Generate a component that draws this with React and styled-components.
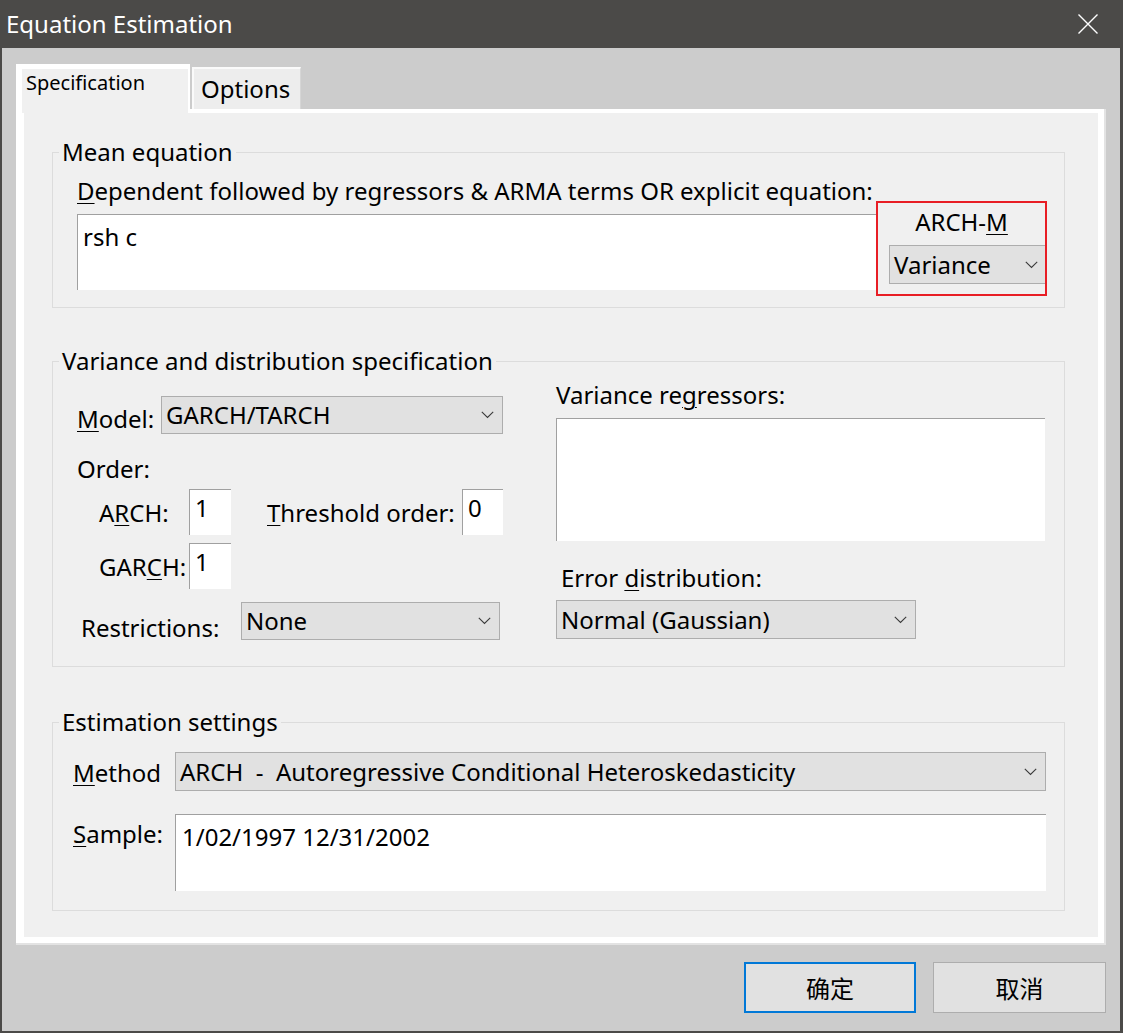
import React from "react";
import styled, { createGlobalStyle } from "styled-components";

const FONT = `"Noto Sans", "Noto Sans CJK SC", sans-serif`;

const GlobalStyle = createGlobalStyle`
  html, body {
    margin: 0;
    padding: 0;
    background: #cccccc;
  }
  * {
    box-sizing: border-box;
  }
`;

const Window = styled.div`
  width: 1123px;
  height: 1033px;
  display: flex;
  flex-direction: column;
  background: #cccccc;
  border-left: 2px solid #4b4a48;
  border-right: 3px solid #4b4a48;
  border-bottom: 2px solid #4b4a48;
  font-family: ${FONT};
  font-size: 24px;
  color: #000;
  overflow: hidden;
`;

const TitleBar = styled.div`
  height: 48px;
  flex: 0 0 48px;
  display: flex;
  align-items: center;
  justify-content: space-between;
  padding: 0 22px 0 4px;
  background: #4b4a48;
  color: #fff;
`;

const Title = styled.div`
  font-size: 24px;
  line-height: 32px;
`;

const Body = styled.div`
  flex: 1;
  display: flex;
  flex-direction: column;
  padding: 16px 14px 0 14px;
`;

const TabRow = styled.div`
  display: flex;
  align-items: flex-end;
  gap: 2px;
  height: 45px;
`;

const ActiveTab = styled.div`
  position: relative;
  z-index: 1;
  width: 174px;
  height: 49px;
  margin-bottom: -4px;
  padding: 0 0 0 4px;
  background: #f0f0f0;
  border-top: 5px solid #fff;
  border-left: 6px solid #fff;
  border-right: 2px solid #fff;
  font-size: 20px;
  line-height: 28px;
`;

const Tab = styled.div`
  width: 109px;
  height: 42px;
  padding: 4px 0 0 7px;
  background: #ededed;
  border-top: 2px solid #fafafa;
  border-left: 2px solid #fafafa;
  border-right: 1px solid #d6d6d6;
  font-size: 24px;
  line-height: 32px;
`;

const Panel = styled.div`
  height: 836px;
  padding: 4px 6px 6px 8px;
  background: #fff;
  border-right: 2px solid #e3e3e3;
  border-bottom: 2px solid #e3e3e3;
`;

const PanelInner = styled.div`
  height: 100%;
  display: flex;
  flex-direction: column;
  padding: 23px 0 0 28px;
  background: #f0f0f0;
`;

const Group = styled.fieldset`
  width: 1013px;
  min-width: 0;
  margin: ${(p) => p.$mt || 0}px 0 0 0;
  padding: 0;
  border: 1px solid #dcdcdc;
`;

const Legend = styled.legend`
  margin-left: 6px;
  padding: 0 3px;
  font-size: 24px;
  line-height: 32px;
`;

const GroupBody = styled.div`
  padding: ${(p) => p.$pad};
`;

const Label = styled.div`
  flex: 0 0 auto;
  width: ${(p) => (p.$w ? `${p.$w}px` : "auto")};
  margin-top: ${(p) => p.$mt || 0}px;
  margin-left: ${(p) => p.$ml || 0}px;
  padding-top: ${(p) => p.$pt || 0}px;
  line-height: 32px;
  white-space: nowrap;

  u {
    text-decoration-thickness: 1px;
    text-underline-offset: 3px;
  }
`;

const Row = styled.div`
  display: flex;
  align-items: flex-start;
  margin-top: ${(p) => p.$mt || 0}px;
`;

const Field = styled.div`
  flex: 0 0 auto;
  width: ${(p) => p.$w}px;
  height: ${(p) => p.$h}px;
  margin-top: ${(p) => p.$mt || 0}px;
  padding: ${(p) => p.$pad || "2px 5px"};
  background: #fff;
  border-top: 1px solid #a0a0a0;
  border-left: 1px solid #a0a0a0;
  line-height: 32px;
  white-space: pre;
`;

const SelectBox = styled.div`
  flex: 0 0 auto;
  display: flex;
  align-items: center;
  justify-content: space-between;
  width: ${(p) => p.$w}px;
  height: ${(p) => p.$h}px;
  margin-top: ${(p) => p.$mt || 0}px;
  padding: 0 8px 0 4px;
  background: #e1e1e1;
  border: 1px solid #adadad;
  line-height: 32px;
  white-space: pre;
  overflow: hidden;
`;

const Chevron = () => (
  <svg width="13" height="8" viewBox="0 0 13 8" fill="none">
    <path d="M0.8 0.8 L6.5 6.5 L12.2 0.8" stroke="#3a3a3a" strokeWidth="1.1" />
  </svg>
);

const Select = ({ children, ...rest }) => (
  <SelectBox {...rest}>
    <span>{children}</span>
    <Chevron />
  </SelectBox>
);

const MeanRow = styled.div`
  display: flex;
  align-items: flex-start;
`;

const MeanLeft = styled.div`
  width: 799px;
  flex: 0 0 799px;
`;

const ArchMBox = styled.div`
  width: 171px;
  height: 95px;
  margin-top: 26px;
  padding: 3px 0 0 11px;
  border: 2px solid #e81e25;
  overflow: hidden;
`;

const ArchMTitle = styled.div`
  line-height: 32px;
  text-align: center;
  padding-right: 11px;

  u {
    text-decoration-thickness: 1px;
    text-underline-offset: 3px;
  }
`;

const VarGrid = styled.div`
  display: grid;
  grid-template-columns: 426px 489px;
  column-gap: 53px;
`;

const Column = styled.div`
  display: flex;
  flex-direction: column;
  align-items: flex-start;
`;

const ButtonRow = styled.div`
  display: flex;
  justify-content: flex-end;
  gap: 17px;
  margin-top: 17px;
`;

const Button = styled.div`
  width: ${(p) => p.$w}px;
  height: 51px;
  display: flex;
  align-items: center;
  justify-content: center;
  background: #e1e1e1;
  border: ${(p) => (p.$primary ? "2px solid #0078d7" : "1px solid #adadad")};
  font-family: "Noto Sans CJK SC", sans-serif;
  font-size: 24px;
`;

const CloseIcon = () => (
  <svg width="20" height="20" viewBox="0 0 20 20">
    <path d="M0.5 0.5 L19.5 19.5 M19.5 0.5 L0.5 19.5" stroke="#fff" strokeWidth="1.4" />
  </svg>
);

export default function App() {
  return (
    <>
      <GlobalStyle />
      <Window>
        <TitleBar>
          <Title>Equation Estimation</Title>
          <CloseIcon />
        </TitleBar>
        <Body>
          <TabRow>
            <ActiveTab>Specification</ActiveTab>
            <Tab>Options</Tab>
          </TabRow>
          <Panel>
            <PanelInner>
              <Group>
                <Legend>Mean equation</Legend>
                <GroupBody $pad="7px 0 11px 24px">
                  <MeanRow>
                    <MeanLeft>
                      <Label>
                        <u>D</u>ependent followed by regressors &amp; ARMA terms OR explicit equation:
                      </Label>
                      <Field $w={799} $h={76} $mt={7} $pad="6px 5px">
                        rsh c
                      </Field>
                    </MeanLeft>
                    <ArchMBox>
                      <ArchMTitle>
                        ARCH-<u>M</u>
                      </ArchMTitle>
                      <Select $w={158} $h={39} $mt={7}>
                        Variance
                      </Select>
                    </ArchMBox>
                  </MeanRow>
                </GroupBody>
              </Group>

              <Group $mt={37}>
                <Legend>Variance and distribution specification</Legend>
                <GroupBody $pad="2px 0 22px 24px">
                  <VarGrid>
                    <Column>
                      <Row $mt={17}>
                        <Label $w={84} $pt={7}>
                          <u>M</u>odel:
                        </Label>
                        <Select $w={342} $h={38}>
                          GARCH/TARCH
                        </Select>
                      </Row>
                      <Label $mt={18}>Order:</Label>
                      <Row $mt={4}>
                        <Label $w={90} $ml={22} $pt={8}>
                          A<u>R</u>CH:
                        </Label>
                        <Field $w={42} $h={46}>
                          1
                        </Field>
                        <Label $w={195} $ml={36} $pt={8}>
                          <u>T</u>hreshold order:
                        </Label>
                        <Field $w={41} $h={46}>
                          0
                        </Field>
                      </Row>
                      <Row $mt={8}>
                        <Label $w={90} $ml={22} $pt={8}>
                          GAR<u>C</u>H:
                        </Label>
                        <Field $w={42} $h={46}>
                          1
                        </Field>
                      </Row>
                      <Row $mt={13}>
                        <Label $w={160} $ml={4} $pt={10}>
                          Restrictions:
                        </Label>
                        <Select $w={259} $h={38}>
                          None
                        </Select>
                      </Row>
                    </Column>
                    <Column>
                      <Label>
                        Variance re<u>g</u>ressors:
                      </Label>
                      <Field $w={489} $h={123} $mt={7} />
                      <Label $mt={21} $ml={5}>
                        Error <u>d</u>istribution:
                      </Label>
                      <Select $w={360} $h={39} $mt={6}>
                        Normal (Gaussian)
                      </Select>
                    </Column>
                  </VarGrid>
                </GroupBody>
              </Group>

              <Group $mt={39}>
                <Legend>Estimation settings</Legend>
                <GroupBody $pad="14px 0 19px 20px">
                  <Row>
                    <Label $w={102} $pt={5}>
                      <u>M</u>ethod
                    </Label>
                    <Select $w={871} $h={39}>
                      {"ARCH  -  Autoregressive Conditional Heteroskedasticity"}
                    </Select>
                  </Row>
                  <Row $mt={23}>
                    <Label $w={102} $pt={4}>
                      <u>S</u>ample:
                    </Label>
                    <Field $w={871} $h={77} $pad="6px 6px">
                      1/02/1997 12/31/2002
                    </Field>
                  </Row>
                </GroupBody>
              </Group>
            </PanelInner>
          </Panel>
          <ButtonRow>
            <Button $w={172} $primary>
              确定
            </Button>
            <Button $w={173}>取消</Button>
          </ButtonRow>
        </Body>
      </Window>
    </>
  );
}
